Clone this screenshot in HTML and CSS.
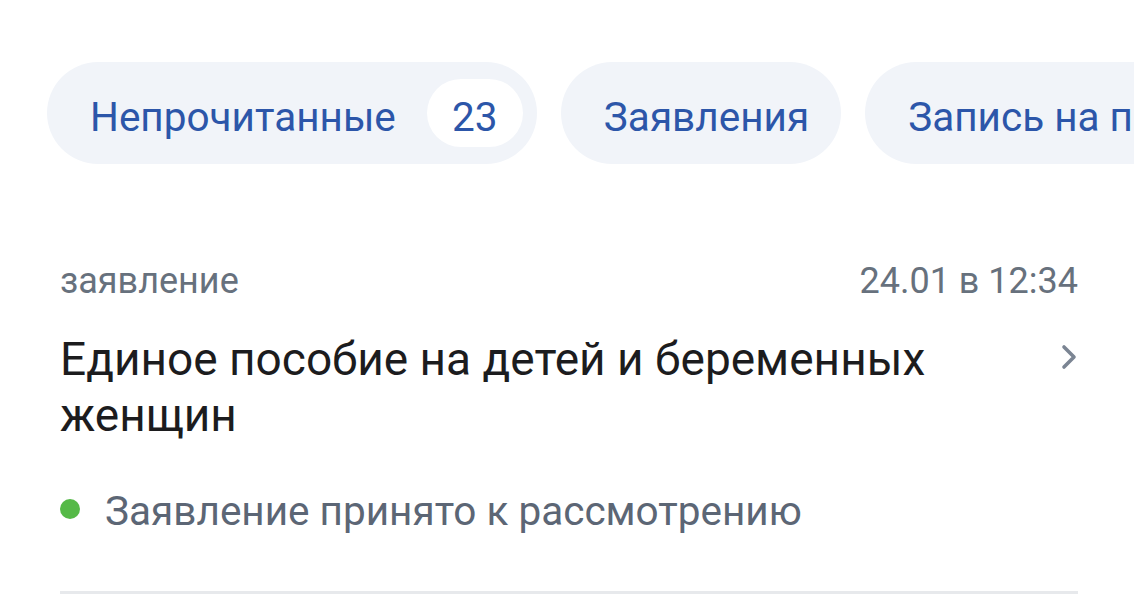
FILE: index.html
```html
<!DOCTYPE html>
<html lang="ru">
<head>
    <meta charset="UTF-8">
    <meta name="viewport" content="width=device-width, initial-scale=1.0">
    <title>Уведомления</title>
    <link rel="stylesheet" href="styles.css">
</head>
<body>

<div class="filters">
    <div class="chip"><span class="chip-label">Непрочитанные</span><span class="badge">23</span></div>
    <div class="chip"><span class="chip-label">Заявления</span></div>
    <div class="chip"><span class="chip-label">Запись на прием</span></div>
</div>

<div class="feed">
    <div class="item">
        <div class="item-head">
            <span class="item-type">заявление</span>
            <span class="item-date">24.01 в 12:34</span>
        </div>
        <div class="item-body">
            <div class="item-title">Единое пособие на детей и беременных женщин</div>
            <svg class="chevron" width="18" height="28" viewBox="0 0 18 28">
                <path d="M4 4 L14 14 L4 24" fill="none" stroke="#7b8593" stroke-width="3.6" stroke-linecap="round" stroke-linejoin="round"/>
            </svg>
        </div>
        <div class="item-status">
            <span class="dot"></span>
            Заявление принято к рассмотрению
        </div>
    </div>
</div>

</body>
</html>
```

FILE: styles.css
```css
body {
    margin: 0;
    background: #ffffff;
    font-family: Roboto, 'Noto Sans', Arial, sans-serif;
    overflow: hidden;
}

/* chips */
.filters {
    display: flex;
    gap: 24px;
    padding: 62px 0 0 47px;
    white-space: nowrap;
    overflow: hidden;
}

.chip {
    flex: none;
    display: flex;
    align-items: center;
    height: 102px;
    padding: 0 32px 0 43px;
    border-radius: 51px;
    background-color: #f1f4f9;
    color: #2c56a9;
    font-size: 40.5px;
    box-sizing: border-box;
}

.chip:first-child {
    padding-right: 14px;
}

.chip-label {
    padding-top: 7px;
}

.badge {
    display: flex;
    align-items: center;
    justify-content: center;
    width: 96px;
    height: 68px;
    margin-left: 31px;
    padding-top: 7px;
    box-sizing: border-box;
    border-radius: 34px;
    background-color: #ffffff;
}

/* list */
.feed {
    padding: 0 56px 0 60px;
    margin-top: 97px;
}

.item {
    border-bottom: 3px solid #e7e9ec;
    padding-bottom: 56px;
}

.item-head {
    display: flex;
    justify-content: space-between;
    color: #67717d;
    font-size: 36px;
    line-height: 40px;
}

.item-body {
    display: flex;
    justify-content: space-between;
    align-items: flex-start;
    margin-top: 30px;
}

.item-title {
    color: #1c1c1e;
    font-size: 46px;
    line-height: 56px;
    max-width: 900px;
}

.chevron {
    margin: 12px 0 0 0;
    flex: none;
}

.item-status {
    display: flex;
    align-items: center;
    margin-top: 44px;
    color: #5c6675;
    font-size: 40.5px;
    line-height: 48px;
}

.dot {
    width: 20px;
    height: 20px;
    border-radius: 50%;
    background-color: #55b947;
    margin: -4px 25px 0 0;
}
```
